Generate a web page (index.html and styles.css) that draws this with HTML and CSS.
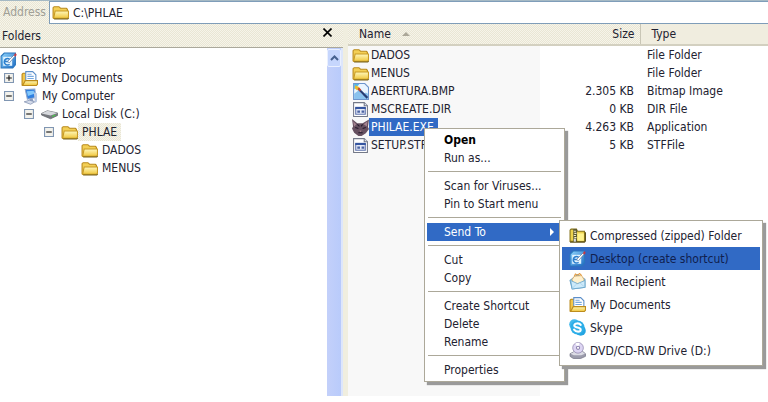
FILE: index.html
```
<!DOCTYPE html>
<html lang="en">
<head>
<meta charset="utf-8">
<title>C:\PHLAE</title>
<link rel="stylesheet" href="styles.css">
</head>
<body>
<svg class="defs" aria-hidden="true">
  <defs>
    <linearGradient id="gold" x2="0" y2="1"><stop stop-color="#fff9bd"/><stop offset="1" stop-color="#f0c63c"/></linearGradient>
    <linearGradient id="blue" x2="1" y2="1"><stop stop-color="#8fd4fb"/><stop offset="1" stop-color="#1d6cc4"/></linearGradient>
    <symbol id="folder" viewBox="0 0 16 16">
      <path d="M1 13V3.500L2 2.500h4.500L8 4h5.500l1 1V13z" fill="#f3cf55" stroke="#b98a1c"/>
      <path d="M1.500 13.500L3 6.500h12.500v6l-1 1z" fill="url(#gold)" stroke="#c79a25"/>
      <path d="M2 14.200h12.800l.9-1" fill="none" stroke="#75601c"/>
    </symbol>
    <symbol id="desktop" viewBox="0 0 16 16">
      <path d="M1 4l3-3h10.500v11L12 15H1z" fill="url(#blue)" stroke="#2a77bd"/>
      <path d="M3 4.500h8.500V13H3z" fill="#e2f4ff"/>
      <path d="M9.800 8A3 3 0 1 0 9 11.500M4.500 9H9" fill="none" stroke="#2c7fce" stroke-width="1.400"/>
      <path d="M7 9l6.500-6.500 1 1L9 10z" fill="#fff" stroke="#506c98" stroke-width=".6"/>
      <path d="M13 3l1.500-2 1.300 1.500L14.500 4.500z" fill="#c33b46"/>
    </symbol>
    <symbol id="documents" viewBox="0 0 16 16">
      <path d="M1 14V4l1-1h3v11z" fill="#f3c64a" stroke="#b88616"/>
      <path d="M4.500 1.500H11l3 3V12H4.500z" fill="#fff" stroke="#5c8fc9"/>
      <path d="M6 4h4M6 6h6M6 8h6" stroke="#77a9df"/>
      <path d="M1.500 14.500L4 10h11.500v3.500l-1 1z" fill="url(#gold)" stroke="#bd8c1d"/>
    </symbol>
    <symbol id="computer" viewBox="0 0 16 16">
      <path d="M4 1.500l9-.5 1 8-8 1.500z" fill="#2f7fe0" stroke="#8fa6cb"/>
      <path d="M5.500 3l6.500-.5.500 3-6 2z" fill="#83c8fb"/>
      <path d="M8 10h3l1 3H8z" fill="#8e9fc0"/>
      <path d="M3 13l5-1.500 5 1.500-4 2.300z" fill="#d4dbea" stroke="#7f8fb0" stroke-width=".7"/>
      <path d="M12 4l3 1v8l-2 1z" fill="#b9c8e2"/>
    </symbol>
    <symbol id="disk" viewBox="0 0 16 16">
      <path d="M0.500 7L6 4.500l9.500 2V9L9 12 .5 8.500z" fill="#77797e" stroke="#606268" stroke-width=".7"/>
      <path d="M.5 7L6 4.500l9.500 2L9 9z" fill="#d7d9dd"/>
      <path d="M10.500 9.800l3-1.300" stroke="#46d045"/>
    </symbol>
    <symbol id="bitmap" viewBox="0 0 16 16">
      <path d="M1.500.5H12L15.500 4v11.500h-14z" fill="#eaf5ff" stroke="#6d94cc"/>
      <path d="M2 10l4-3 4 4 3-2 2 1v5H2z" fill="#8ac2ee"/>
      <path d="M2 1h5L2 6z" fill="#54b6e8"/>
      <path d="M5 4.500l9.500 9.500" stroke="#263d75" stroke-width="2"/>
      <path d="M3 2l4 2-2 3-2.500-2z" fill="#e7bc31"/>
      <path d="M6 5l2 2" stroke="#d84326" stroke-width="2"/>
    </symbol>
    <symbol id="sysfile" viewBox="0 0 16 16">
      <path d="M1.500 1.500h10L14.500 4.500v10h-13z" fill="#fff" stroke="#747988"/>
      <path d="M11.500 1.500v3h3" fill="#dce2ee" stroke="#747988"/>
      <path d="M3.500 6.500h9v6h-9z" fill="#e4e9f6" stroke="#6175ad"/>
      <path d="M3 5.500h10v2H3z" fill="#34549f"/>
      <path d="M5 9h2.500v2H5zM9 9h2.500v2H9z" fill="#4b63a2"/>
    </symbol>
    <symbol id="cat" viewBox="0 0 16 16">
      <path d="M0 0l5 4h5l6-3.500-1 7 1 2-3 4-4 2.500H6L2 13 0 9l1-2z" fill="#665060"/>
      <path d="M1 2l3 3-2 2zM14.500 2L11 5l3 2z" fill="#a58490"/>
      <path d="M3 8l3 1M10 9l3-1M6 13h4M5 5l2 2M10 5L8.500 7" stroke="#251b2b"/>
      <path d="M7 11h2l-1 1z" fill="#d9a4aa"/>
    </symbol>
    <symbol id="zip" viewBox="0 0 16 16">
      <path d="M1 13V3l1-1h5l1 2h6.500v9.500H1z" fill="#ecd34d" stroke="#827017"/>
      <path d="M8 6h6v7H8z" fill="#fff38d"/>
      <path d="M4 2h3.500v12H4z" fill="#575632"/>
      <path d="M4.500 4h2M5 6h2M4.500 8h2M5 10h2" stroke="#f6f2c8"/>
      <path d="M4.500 11h2v3h-2z" fill="#ddd"/>
      <path d="M1 14.300h13.500l1-1V5" fill="none" stroke="#5d521b"/>
    </symbol>
    <symbol id="mail" viewBox="0 0 16 16">
      <path d="M1 7l7-5.500L15 6v7.500L3 15z" fill="#b8def3" stroke="#659fc4"/>
      <path d="M3 6l2-3 7-.5L14 6v4H4z" fill="#fff1ce" stroke="#dfaa5d" stroke-width=".7"/>
      <path d="M5 3l1-2 2 1 2-1.500 2 2" fill="none" stroke="#e59d43"/>
      <path d="M1.500 7l6.500 3 7-3v6.500L3 15z" fill="#cdeafa" stroke="#69a7cd" stroke-width=".8"/>
      <path d="M3 14.500l4-4M14.500 13l-4-3.500" stroke="#a3cfe8" stroke-width=".7"/>
    </symbol>
    <symbol id="skype" viewBox="0 0 16 16">
      <circle cx="5" cy="5" r="4.800" fill="#42b9ed"/><circle cx="11" cy="11" r="4.800" fill="#24a5e2"/><circle cx="8" cy="8" r="6.600" fill="#2daee8"/>
      <path d="M11 5.500C9.500 3.500 5 3.800 5 6.200S11 7.500 11 10 6.500 12.500 4.800 10" fill="none" stroke="#fff" stroke-width="2" stroke-linecap="round"/>
    </symbol>
    <symbol id="dvd" viewBox="0 0 16 16">
      <path d="M1 11l4-2h8l2.500 2v2.500L11 15.500H4L1 13.500z" fill="#9c9cac" stroke="#747486" stroke-width=".7"/>
      <path d="M1.500 11l4-2h7l2.500 2-3.500 1.500h-7z" fill="#dcdce5"/>
      <circle cx="8.500" cy="5.500" r="5" fill="#ddd5f3" stroke="#9990b6" stroke-width=".8"/>
      <path d="M8.500 5.500L6 1.500a5 5 0 0 1 4-.5z" fill="#fff"/>
      <circle cx="8.500" cy="5.500" r="1.500" fill="#fff" stroke="#8c82ad"/>
    </symbol>
    <symbol id="plus" viewBox="0 0 9 9"><path d="M.5.5h8v8h-8z" fill="#f3f2ec" stroke="#8096b2"/><path d="M2 4.500h5M4.500 2v5" stroke="#111"/></symbol>
    <symbol id="minus" viewBox="0 0 9 9"><path d="M.5.5h8v8h-8z" fill="#f3f2ec" stroke="#8096b2"/><path d="M2 4.500h5" stroke="#111"/></symbol>
  </defs>
</svg>

<div class="window">
  <form class="address-bar">
    <label for="address">Address</label>
    <div class="address-box">
      <svg class="icon"><use href="#folder"/></svg>
      <input id="address" type="text" value="C:\PHLAE">
    </div>
  </form>

  <div class="panes">
    <aside class="folders">
      <header class="folders-head">
        <span>Folders</span>
        <button class="close" type="button" aria-label="Close"><svg viewBox="0 0 9 9"><path d="M.5.5l8 8M8.500.5l-8 8" stroke="#000" stroke-width="1.600"/></svg></button>
      </header>
      <div class="tree-area">
        <ul class="tree">
          <li>
            <div class="node root"><svg class="icon"><use href="#desktop"/></svg><span>Desktop</span></div>
            <ul>
              <li><div class="node"><svg class="toggle"><use href="#plus"/></svg><svg class="icon"><use href="#documents"/></svg><span>My Documents</span></div></li>
              <li>
                <div class="node"><svg class="toggle"><use href="#minus"/></svg><svg class="icon"><use href="#computer"/></svg><span>My Computer</span></div>
                <ul>
                  <li>
                    <div class="node"><svg class="toggle"><use href="#minus"/></svg><svg class="icon"><use href="#disk"/></svg><span>Local Disk (C:)</span></div>
                    <ul>
                      <li>
                        <div class="node"><svg class="toggle"><use href="#minus"/></svg><svg class="icon"><use href="#folder"/></svg><span class="current">PHLAE</span></div>
                        <ul>
                          <li><div class="node leaf"><svg class="icon"><use href="#folder"/></svg><span>DADOS</span></div></li>
                          <li><div class="node leaf"><svg class="icon"><use href="#folder"/></svg><span>MENUS</span></div></li>
                        </ul>
                      </li>
                    </ul>
                  </li>
                </ul>
              </li>
            </ul>
          </li>
        </ul>
        <div class="scrollbar">
          <button class="scroll-up" type="button" aria-label="Scroll up"><svg viewBox="0 0 9 6"><path d="M1 5l3.500-3.500L8 5" fill="none" stroke="#46618f" stroke-width="2"/></svg></button>
        </div>
      </div>
    </aside>

    <main class="files">
      <table>
        <thead>
          <tr><th class="name">Name <span class="sort"></span></th><th class="size">Size</th><th class="type">Type</th></tr>
        </thead>
        <tbody>
          <tr><td class="name"><div class="file"><svg class="icon"><use href="#folder"/></svg><span>DADOS</span></div></td><td class="size"></td><td class="type">File Folder</td></tr>
          <tr><td class="name"><div class="file"><svg class="icon"><use href="#folder"/></svg><span>MENUS</span></div></td><td class="size"></td><td class="type">File Folder</td></tr>
          <tr><td class="name"><div class="file"><svg class="icon"><use href="#bitmap"/></svg><span>ABERTURA.BMP</span></div></td><td class="size">2.305 KB</td><td class="type">Bitmap Image</td></tr>
          <tr><td class="name"><div class="file"><svg class="icon"><use href="#sysfile"/></svg><span>MSCREATE.DIR</span></div></td><td class="size">0 KB</td><td class="type">DIR File</td></tr>
          <tr><td class="name"><div class="file"><svg class="icon"><use href="#cat"/></svg><span class="selected">PHILAE.EXE</span></div></td><td class="size">4.263 KB</td><td class="type">Application</td></tr>
          <tr><td class="name"><div class="file"><svg class="icon"><use href="#sysfile"/></svg><span>SETUP.STF</span></div></td><td class="size">5 KB</td><td class="type">STFFile</td></tr>
        </tbody>
      </table>
      <div class="list-space"><div class="sorted-space"></div></div>

      <div class="menu context">
        <button type="button" class="default">Open</button>
        <button type="button">Run as...</button>
        <hr>
        <button type="button">Scan for Viruses...</button>
        <button type="button">Pin to Start menu</button>
        <hr>
        <div class="has-submenu">
          <button type="button" class="active">Send To<span class="arrow"></span></button>
          <div class="menu submenu">
            <button type="button"><svg class="icon"><use href="#zip"/></svg>Compressed (zipped) Folder</button>
            <button type="button" class="active"><svg class="icon"><use href="#desktop"/></svg>Desktop (create shortcut)</button>
            <button type="button"><svg class="icon"><use href="#mail"/></svg>Mail Recipient</button>
            <button type="button"><svg class="icon"><use href="#documents"/></svg>My Documents</button>
            <button type="button"><svg class="icon"><use href="#skype"/></svg>Skype</button>
            <button type="button"><svg class="icon"><use href="#dvd"/></svg>DVD/CD-RW Drive (D:)</button>
          </div>
        </div>
        <hr>
        <button type="button">Cut</button>
        <button type="button">Copy</button>
        <hr>
        <button type="button">Create Shortcut</button>
        <button type="button">Delete</button>
        <button type="button">Rename</button>
        <hr>
        <button type="button">Properties</button>
      </div>
    </main>
  </div>
</div>
</body>
</html>
```
FILE: styles.css
```
:root {
  --text: #222230;
  --highlight: #316ac5;
  --dither: repeating-conic-gradient(#e9e6d4 0 25%, #f6f4ea 0 50%) 0 0 / 2px 2px;
  --sorted: #f8f8f8;
}

* { box-sizing: border-box; }

body {
  margin: 0;
  background: #fff;
  color: var(--text);
  font: 12px/18px "DejaVu Sans Condensed", "DejaVu Sans", sans-serif;
}

button, input { font: inherit; color: inherit; }
ul { list-style: none; margin: 0; padding: 0; }

.defs { position: absolute; width: 0; height: 0; }
.icon { width: 17px; height: 17px; flex: none; }

.window {
  display: flex;
  flex-direction: column;
  height: 100vh;
  padding-bottom: 6px;
}

.address-bar {
  display: flex;
  height: 24px;
  flex: none;
  border-top: 1px solid #a5b9c4;
  background: var(--dither);
}
.address-bar label { width: 49px; padding: 2px 0 0 3px; color: #a09f96; }
.address-box {
  display: flex;
  flex: 1;
  align-items: center;
  gap: 4px;
  padding-left: 2px;
  border: 1px solid #7f9db9;
  border-right: 0;
  background: #fff;
}
.address-box input { flex: 1; min-width: 0; padding: 0; border: 0; outline: 0; background: none; }

.panes { display: flex; flex: 1; min-height: 0; }

.folders {
  display: flex;
  flex-direction: column;
  flex: none;
  width: 348px;
  border-right: 5px solid #f0eedf;
}
.folders-head {
  display: flex;
  align-items: center;
  justify-content: space-between;
  height: 24px;
  padding: 0 11px 0 2px;
  border-bottom: 1px solid #aaa89b;
  background: var(--dither);
}
.close { display: flex; padding: 0; border: 0; background: none; }
.close svg { width: 9px; height: 9px; margin-bottom: 6px; }

.tree-area { display: flex; flex: 1; }
.tree { flex: 1; padding-top: 3px; }
.tree ul ul { padding-left: 20px; }
.node { display: flex; align-items: center; height: 18px; padding-left: 4px; }
.node.root { padding-left: 0; }
.node.leaf { padding-left: 21px; }
.node span { padding-left: 4px; }
.node .current { padding-right: 4px; background: var(--dither); }
.toggle { width: 10px; height: 10px; margin-right: 7px; flex: none; }

.scrollbar {
  width: 16px;
  border-right: 2px solid #dde6fb;
  background: linear-gradient(90deg, #c3d0fa, #b9cbfb);
}
.scroll-up {
  display: flex;
  align-items: center;
  justify-content: center;
  width: 14px;
  height: 18px;
  padding: 0;
  margin-top: 1px;
  border: 1px solid #eaf0ff;
  border-radius: 2px;
  background: #c6d6fd;
}
.scroll-up svg { width: 9px; height: 6px; }

.files { position: relative; display: flex; flex-direction: column; flex: 1; min-width: 0; }
table { width: 100%; table-layout: fixed; border-collapse: collapse; }
th {
  height: 21px;
  padding: 0;
  border-bottom: 2px solid #d3d0c0;
  background: var(--dither);
  font-weight: normal;
  text-align: left;
}
td { height: 18px; padding: 0; white-space: nowrap; }
th.name { width: 192px; padding-left: 11px; }
td.name { padding-left: 4px; background: var(--sorted); }
th.size { width: 100px; padding-right: 5px; border-right: 1px solid #c9c6b6; text-align: right; }
td.size { padding-right: 6px; text-align: right; }
th.type { padding-left: 11px; }
td.type { padding-left: 7px; }
.sort {
  display: inline-block;
  margin-left: 8px;
  border: 4px solid transparent;
  border-top: 0;
  border-bottom-color: #aca899;
  vertical-align: 2px;
}
.file { display: flex; align-items: center; height: 18px; }
.file span { padding: 0 4px 0 2px; }
.file .selected { background: var(--highlight); color: #fff; }
.list-space { flex: 1; }
.sorted-space { width: 192px; height: 100%; background: var(--sorted); }

.menu {
  position: absolute;
  padding: 2px;
  border: 1px solid #aca899;
  background: #fff;
  box-shadow: 3px 3px 1px #9a9a9a;
}
.menu button {
  display: flex;
  align-items: center;
  width: 100%;
  height: 18px;
  padding: 0 8px 0 17px;
  border: 0;
  background: none;
  white-space: nowrap;
}
.menu .default { color: #000; font-weight: bold; }
.menu button.active { background: var(--highlight); color: #fff; }
.menu hr { height: 1px; margin: 4px 1px 5px; border: 0; background: #aca899; }
.context { top: 104px; left: 76px; width: 141px; }
.has-submenu { position: relative; }
.arrow { margin-left: auto; border: 4px solid transparent; border-left-color: #fff; border-right: 0; }
.submenu { top: -3px; left: 132px; width: 204px; padding: 3px 2px; }
.menu .submenu button { gap: 4px; height: 23px; padding: 0 7px; }
.menu .submenu button.active { color: #10204e; }
```
